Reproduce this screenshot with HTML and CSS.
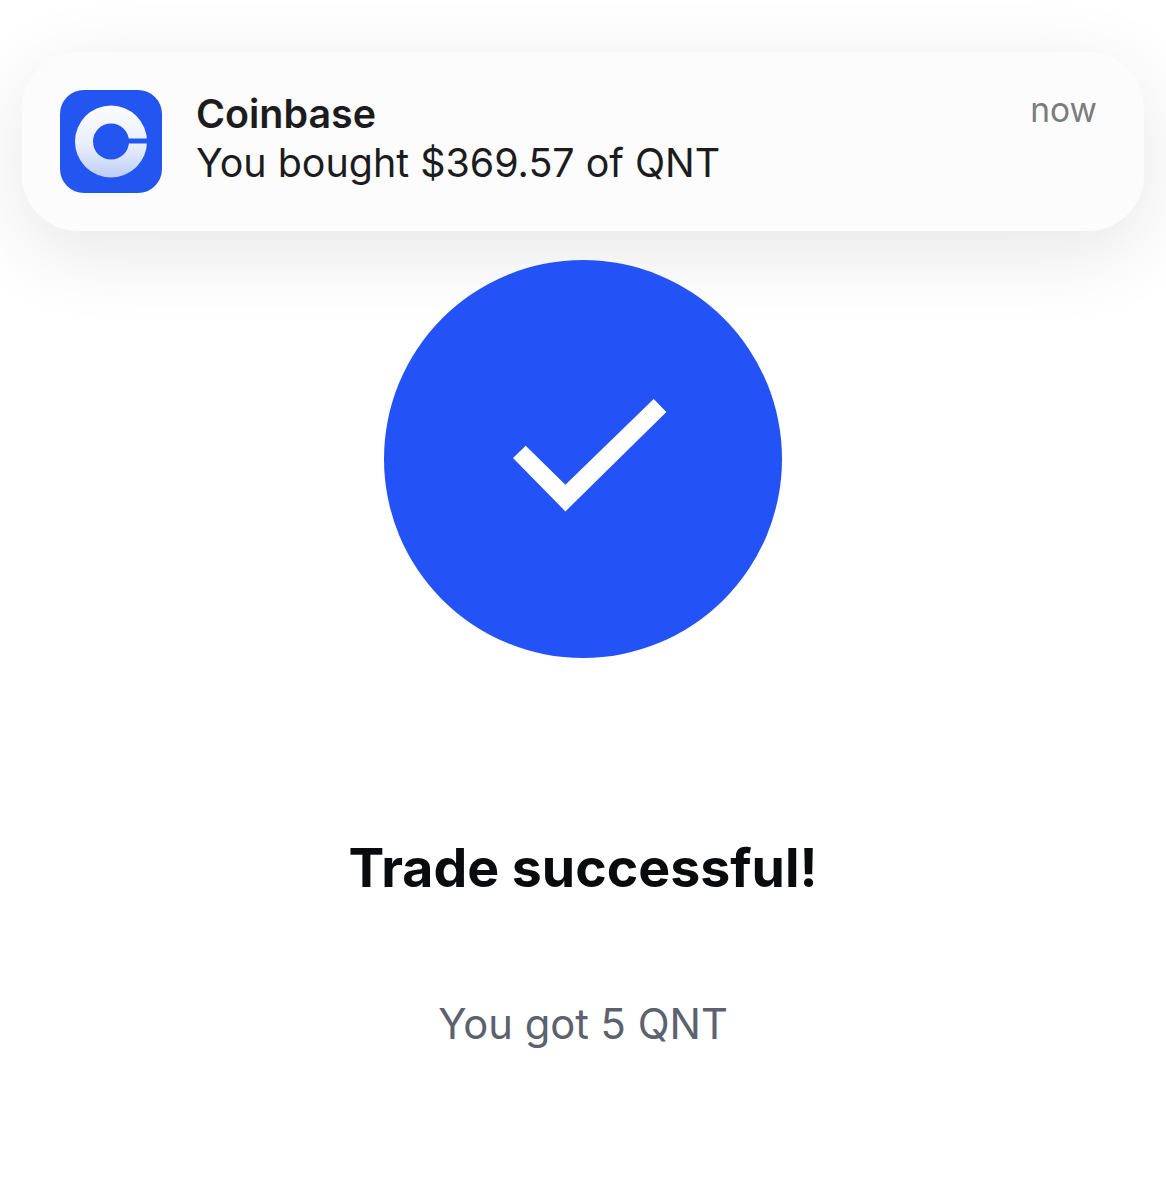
FILE: index.html
```html
<!DOCTYPE html>
<html>
<head>
<meta name="viewport" content="width=device-width, initial-scale=1">
<title>Trade successful</title>
<link rel="stylesheet" href="styles.css">
</head>
<body>

<!-- Push notification -->
<div class="notification">
    <svg class="app-icon" viewBox="0 0 102 103" aria-label="Coinbase logo">
        <defs>
            <linearGradient id="ringFill" x1="0" y1="0" x2="0" y2="1">
                <stop offset="0" stop-color="#fcfdff"/>
                <stop offset="0.55" stop-color="#e9eefb"/>
                <stop offset="1" stop-color="#bccdf6"/>
            </linearGradient>
        </defs>
        <rect width="102" height="103" rx="24" fill="#2356f0"/>
        <circle cx="51" cy="51.5" r="36" fill="url(#ringFill)"/>
        <circle cx="51" cy="51.5" r="18" fill="#2356f0"/>
        <rect x="60" y="48.5" width="30" height="5" fill="#2356f0"/>
    </svg>
    <div class="message">
        <div class="app-name">Coinbase</div>
        <div class="message-text">You bought $369.57 of QNT</div>
    </div>
    <div class="time">now</div>
</div>

<!-- Success screen -->
<div class="success">
    <div class="check-circle">
        <svg class="check" viewBox="0 0 154 113" aria-label="Success">
            <path d="M0 59 L12.7 46.7 L52.4 85.7 L140.7 0 L153.4 13 L52.4 112.4 Z" fill="#fff"/>
        </svg>
    </div>
    <h1 class="title">Trade successful!</h1>
    <p class="subtitle">You got 5 QNT</p>
</div>

</body>
</html>
```

FILE: styles.css
```css
body {
    margin: 0;
    background-color: #fff;
    font-family: Inter, "Liberation Sans", Arial, sans-serif;
}

/* Notification card */
.notification {
    display: flex;
    align-items: flex-start;
    height: 179px;
    margin: 52px 22px 0;
    padding: 38px 47px 0 38px;
    box-sizing: border-box;
    background-color: #fcfcfd;
    border-radius: 56px;
    box-shadow: 0 20px 80px rgba(0, 0, 0, 0.1);
}

.app-icon {
    width: 102px;
    height: 103px;
    flex-shrink: 0;
}

.message {
    flex: 1;
    margin-left: 34px;
    color: #1c1c1e;
    font-size: 39.4px;
    line-height: 49px;
}

.app-name {
    font-weight: 600;
}

.time {
    margin-top: -4px;
    color: #7c7c7e;
    font-size: 33.5px;
    line-height: 49px;
}

/* Success screen */
.success {
    display: flex;
    flex-direction: column;
    align-items: center;
}

.check-circle {
    display: flex;
    align-items: center;
    justify-content: center;
    width: 398px;
    height: 398px;
    margin-top: 29px;
    background-color: #2352f6;
    border-radius: 50%;
}

.check {
    width: 154px;
    height: 113px;
    margin: 0 0 7px 14px;
}

.title {
    margin: 176px 0 0;
    color: #0a0b0d;
    font-size: 53.6px;
    line-height: 68px;
    font-weight: 700;
}

.subtitle {
    margin: 94px 0 0;
    color: #5b616e;
    font-size: 41.7px;
    line-height: 56px;
}
```
